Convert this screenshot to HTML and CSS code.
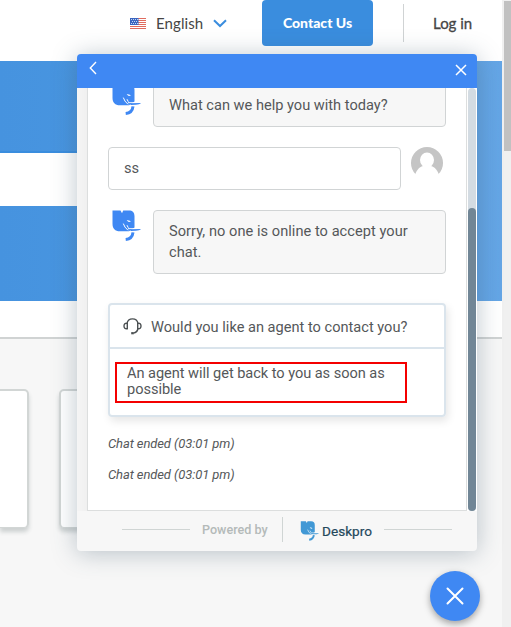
FILE: index.html
```html
<!DOCTYPE html>
<html lang="en">
<head>
<meta charset="utf-8">
<title>Help Center</title>
<link rel="stylesheet" href="styles.css">
</head>
<body>
<svg width="0" height="0" class="defs" aria-hidden="true">
  <symbol id="elephant" viewBox="0 0 30 33">
    <path fill="currentColor" d="M.5.5H8.500l1.500 2.800L11.200.5h5.600c3.800 0 5.700 2 5.700 5.700V17.500L17 21.200H8c-5 0-7.500-2.600-7.500-7.500z"/>
    <path fill="#fff" d="M14.600 10l3.200.7 1 1.400-2.600-.3z"/>
    <path fill="none" stroke="#fff" stroke-width="1" d="M11.300 13.600l1.700 3.500 3 3.200M15 15.200l1.300 2.600M16 18.700h13"/>
    <path fill="currentColor" d="M17 19.200l12-.1c-1 1.100-2.800 1.500-5.200 1.700l-4.800.2z"/>
    <path fill="none" stroke="currentColor" stroke-width="3" d="M21 22.300c-.4 4-2.300 6.700-7.300 7.200"/>
  </symbol>
</svg>
<div class="browser">
  <div class="page">
    <header class="topbar">
      <div class="language">
        <svg class="flag" width="16" height="11" viewBox="0 0 16 11"><path fill="#fff" d="M0 0h16v11H0z"/><path stroke="#e06b5e" d="M0 .5h16M0 2.500h16M0 4.500h16M0 6.500h16M0 8.500h16M0 10.500h16"/><path fill="#3a66c0" d="M0 0h8.500v7H0z"/><path stroke="#c5d5f5" stroke-dasharray="1 1" d="M1 1.500h7M2 3.500h6M1 5.500h7"/></svg>
        <span>English</span>
        <svg class="chevron" width="14" height="9" viewBox="0 0 14 9"><path d="M1 1.300l6 5.700 6-5.700" fill="none" stroke="#3a8dde" stroke-width="2"/></svg>
      </div>
      <div class="contact">Contact Us</div>
      <div class="rule"></div>
      <div class="login">Log in</div>
    </header>
    <section class="hero"><div class="search"></div></section>
    <div class="subbar"></div>
    <section class="cards"><div class="card first"></div><div class="card"></div></section>
  </div>
  <div class="track"><div class="thumb"></div></div>
</div>

<div class="widget">
  <div class="head">
    <svg width="8" height="14" viewBox="0 0 8 14"><path d="M7 1L1.300 7 7 13" fill="none" stroke="#fff" stroke-width="1.400"/></svg>
    <svg width="12" height="12" viewBox="0 0 12 12"><path d="M1 1l10 10M11 1L1 11" stroke="#fff" stroke-width="1.500"/></svg>
  </div>
  <div class="body">
    <div class="chat">
      <div class="row clipped"><svg class="bot"><use href="#elephant"/></svg><div class="bubble agent">What can we help you with today?</div></div>
      <div class="row"><div class="bubble user">ss</div>
        <svg class="avatar" width="32" height="32" viewBox="0 0 32 32"><clipPath id="c"><circle cx="16" cy="16" r="16"/></clipPath><path fill="#c5c5c5" clip-path="url(#c)" d="M0 0h32v32H0z"/><ellipse cx="16" cy="13" rx="7" ry="7.500" fill="#fff"/><path fill="#fff" d="M4 28c1.500-4.500 4-8 8-9h8c4 1 6.500 4.500 8 9v5H4z"/></svg>
      </div>
      <div class="row"><svg class="bot"><use href="#elephant"/></svg><div class="bubble agent wide">Sorry, no one is online to accept your<br>chat.</div></div>
      <div class="form">
        <div class="question">
          <svg width="19" height="17" viewBox="0 0 19 17" fill="none" stroke="#4b5052" stroke-width="1.400"><path d="M4 5.500C4.500 2.500 6.500.9 9.500.9S14.500 2.500 15 5.500M4.300 5.300C2 5 1 6 1 8s1 3 3.300 2.700zM14.700 5.300C17 5 18 6 18 8s-1 3-3.300 2.700zM15 10.500c-.5 2.700-2 4.200-4.500 4.600"/><path d="M8.200 15.200h2.600" stroke-width="2.200"/></svg>
          <span>Would you like an agent to contact you?</span>
        </div>
        <div class="answer"><div class="mark">An agent will get back to you as soon as<br>possible</div></div>
      </div>
      <p class="ended">Chat ended (03:01 pm)</p>
      <p class="ended">Chat ended (03:01 pm)</p>
    </div>
    <div class="scroll"><div class="handle"></div></div>
  </div>
  <footer class="foot">
    <i class="line"></i><span class="powered">Powered by</span><i class="split"></i>
    <svg class="brand"><use href="#elephant"/></svg><span class="name">Deskpro</span><i class="line"></i>
  </footer>
</div>
<div class="launcher"><svg width="18" height="18" viewBox="0 0 18 18"><path d="M1.500 1.500l15 15M16.500 1.500l-15 15" stroke="#fff" stroke-width="2" stroke-linecap="round"/></svg></div>
</body>
</html>
```
FILE: styles.css
```css
* { box-sizing: border-box; }
body { margin: 0; height: 627px; overflow: hidden; font-family: Roboto, "Liberation Sans", sans-serif; color: #55585a; }
.defs { position: absolute; }
svg { flex: none; display: block; }
.browser { display: flex; height: 627px; }
.page { width: 502px; background: #f7f7f7; }
.track { width: 9px; background: #f0f0f0; padding: 1px 0 0 2px; }
.thumb { height: 150px; background: #c1c1c1; }
.topbar { height: 61px; background: #fff; display: flex; align-items: flex-start; padding-left: 130px; font: 15px/20px Lato, sans-serif; color: #454545; }
.language { display: flex; align-items: center; width: 132px; height: 46px; }
.language span { margin-left: 10px; width: 47px; white-space: nowrap; letter-spacing: .1px; }
.chevron { margin-left: 10px; }
.contact { width: 111px; height: 46px; border-radius: 4px; background: #3a8dde; color: #fff; font-weight: 900; font-size: 14px; line-height: 46px; text-align: center; }
.rule { width: 1px; height: 38px; margin: 4px 29px 0 30px; background: #d0d3d4; }
.login { line-height: 47px; -webkit-text-stroke: .3px #454545; white-space: nowrap; }
.hero { height: 240px; padding-top: 90px; background: linear-gradient(90deg, #4693df, #4b98e1 45%, #65a6e6); }
.search { width: 440px; height: 55px; background: #fff; border-top: 2px solid #3a8dde; }
.subbar { height: 38px; background: #fff; border-bottom: 2px solid #d0d3d3; }
.cards { display: flex; gap: 30px; padding-top: 50px; }
.card { width: 320px; height: 139px; background: #fff; border: 2px solid #d2d6d5; border-bottom-width: 1px; border-radius: 5px; box-shadow: 0 4px 4px #cdd1d1; }
.card.first { width: 29px; border-left: 0; border-radius: 0 5px 5px 0; }
.widget { position: absolute; left: 77px; top: 54px; width: 400px; height: 497px; display: flex; flex-direction: column; border-radius: 4px; overflow: hidden; background: #f7f7f7; box-shadow: 0 2px 24px rgba(60, 85, 105, .34); }
.head { height: 34px; background: #3f88f3; display: flex; justify-content: space-between; align-items: center; padding: 0 10px 0 12px; }
.head svg:first-child { margin-bottom: 6px; }
.head svg:last-child { margin-bottom: 2px; }
.body { height: 423px; display: flex; padding-left: 10px; background: linear-gradient(90deg, #f5f5f5, #f0f0f0 10px, #fff 11px); }
.chat { width: 380px; background: #fff; border: 1px solid #dcdede; border-top: 0; padding: 0 20px; overflow: hidden; }
.scroll { width: 8px; margin-left: 1px; padding-top: 120px; background: #d3dbe2; border-radius: 4px; }
.handle { height: 303px; background: #718696; border-radius: 4px; }
.row { display: flex; justify-content: space-between; margin-bottom: 20px; }
.row.clipped { margin-top: -4px; }
.bot { width: 30px; height: 33px; margin-left: 4px; color: #3f88f3; }
.bubble { width: 293px; border: 1px solid #d1d4d5; border-radius: 4px; padding: 10px 15px; font-size: 14.6px; line-height: 21px; white-space: nowrap; }
.agent { background: #f7f7f7; }
.wide { letter-spacing: .04px; }
.avatar { margin-right: 3px; }
.form { margin-top: 29px; height: 114px; border: 2px solid #dae4ec; border-radius: 4px; box-shadow: 2px 4px 9px rgba(0, 0, 0, .1); }
.question { height: 44px; border-bottom: 2px solid #dae4ec; display: flex; align-items: center; padding: 1px 0 0 13px; gap: 9px; font-size: 14.6px; white-space: nowrap; }
.answer { padding: 13px 5px; }
.mark { width: 292px; height: 41px; border: 2px solid #f40000; padding: 1px 10px; font-size: 14.6px; letter-spacing: -.05px; line-height: 16px; white-space: nowrap; }
.ended { margin: 18px 0 0; font-size: 13px; letter-spacing: -.1px; line-height: 17px; font-style: italic; }
.ended + .ended { margin-top: 14px; }
.foot { height: 40px; display: flex; align-items: center; padding: 0 25px 4px 45px; }
.line { width: 68px; height: 1px; background: #d0d5d4; }
.powered { margin-left: 12px; width: 65px; font-size: 12.6px; font-weight: 500; color: #b4bab9; white-space: nowrap; }
.split { width: 1px; height: 25px; margin: 0 17px 0 15px; background: #d0d5d4; }
.brand { width: 20px; height: 21px; margin-top: 4px; color: #4198d5; }
.name { width: 51px; margin: 3px 11px 0 2px; font-size: 13.6px; color: #24485b; -webkit-text-stroke: .2px #24485b; white-space: nowrap; }
.launcher { position: absolute; left: 430px; top: 571px; width: 50px; height: 50px; border-radius: 50%; background: #3f88f3; box-shadow: 0 3px 7px rgba(0, 0, 0, .35); display: flex; align-items: center; justify-content: center; }
```
